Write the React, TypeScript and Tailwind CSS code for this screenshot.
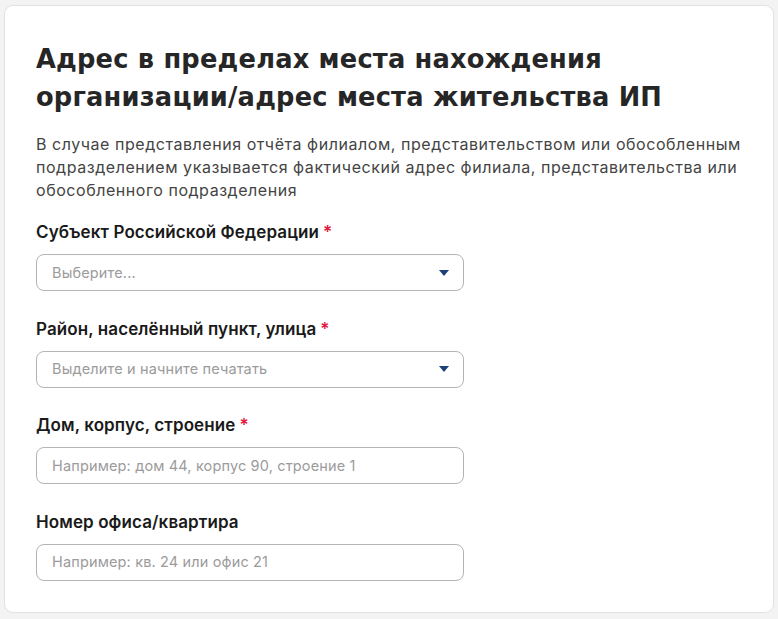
const labelClassName =
  "text-[17px] font-semibold leading-[20px] tracking-[0.1px] text-[#1a1a1a]";

const fieldClassName =
  "flex h-[37px] w-[428px] items-center rounded-[8px] border border-[#b4b4b4] bg-white pl-[15px] pr-[14px] text-[14.5px] tracking-[0.15px] text-[#9b9b9b]";

function Arrow() {
  return (
    <svg width="10" height="6" viewBox="0 0 10 6" className="ml-auto">
      <path d="M0 0h10L5 6z" fill="#1d3f7a" />
    </svg>
  );
}

function Field({
  label,
  required,
  placeholder,
  select,
}: {
  label: string;
  required?: boolean;
  placeholder: string;
  select?: boolean;
}) {
  return (
    <div className="flex flex-col gap-[12px]">
      <span className={labelClassName}>
        {label}
        {required && <span className="ml-[4px] text-[#e2173c]">*</span>}
      </span>
      <div className={fieldClassName}>
        <span>{placeholder}</span>
        {select && <Arrow />}
      </div>
    </div>
  );
}

export default function App() {
  return (
    <div
      className="min-h-[619px] bg-[#f3f3f3] px-[4px] pt-[5px] pb-[7px]"
      style={{ fontFamily: "Inter, 'Noto Sans', sans-serif" }}
    >
      <div className="rounded-[9px] border border-[#e2e2e2] bg-white px-[31px] pt-[34px] pb-[31px]">
        <h1
          className="text-[25.7px] font-bold leading-[38px] tracking-[0.2px] text-[#262626]"
          style={{ fontFamily: "'DejaVu Sans', sans-serif" }}
        >
          Адрес в пределах места нахождения
          <br />
          организации/адрес места жительства ИП
        </h1>

        <p className="mt-[17px] text-[16px] leading-[23px] tracking-[0.55px] text-[#444]">
          В случае представления отчёта филиалом, представительством или обособленным
          подразделением указывается фактический адрес филиала, представительства или
          обособленного подразделения
        </p>

        <div className="mt-[20px] flex flex-col gap-[27.5px]">
          <Field label="Субъект Российской Федерации" required placeholder="Выберите..." select />
          <Field
            label="Район, населённый пункт, улица"
            required
            placeholder="Выделите и начните печатать"
            select
          />
          <Field
            label="Дом, корпус, строение"
            required
            placeholder="Например: дом 44, корпус 90, строение 1"
          />
          <Field label="Номер офиса/квартира" placeholder="Например: кв. 24 или офис 21" />
        </div>
      </div>
    </div>
  );
}
